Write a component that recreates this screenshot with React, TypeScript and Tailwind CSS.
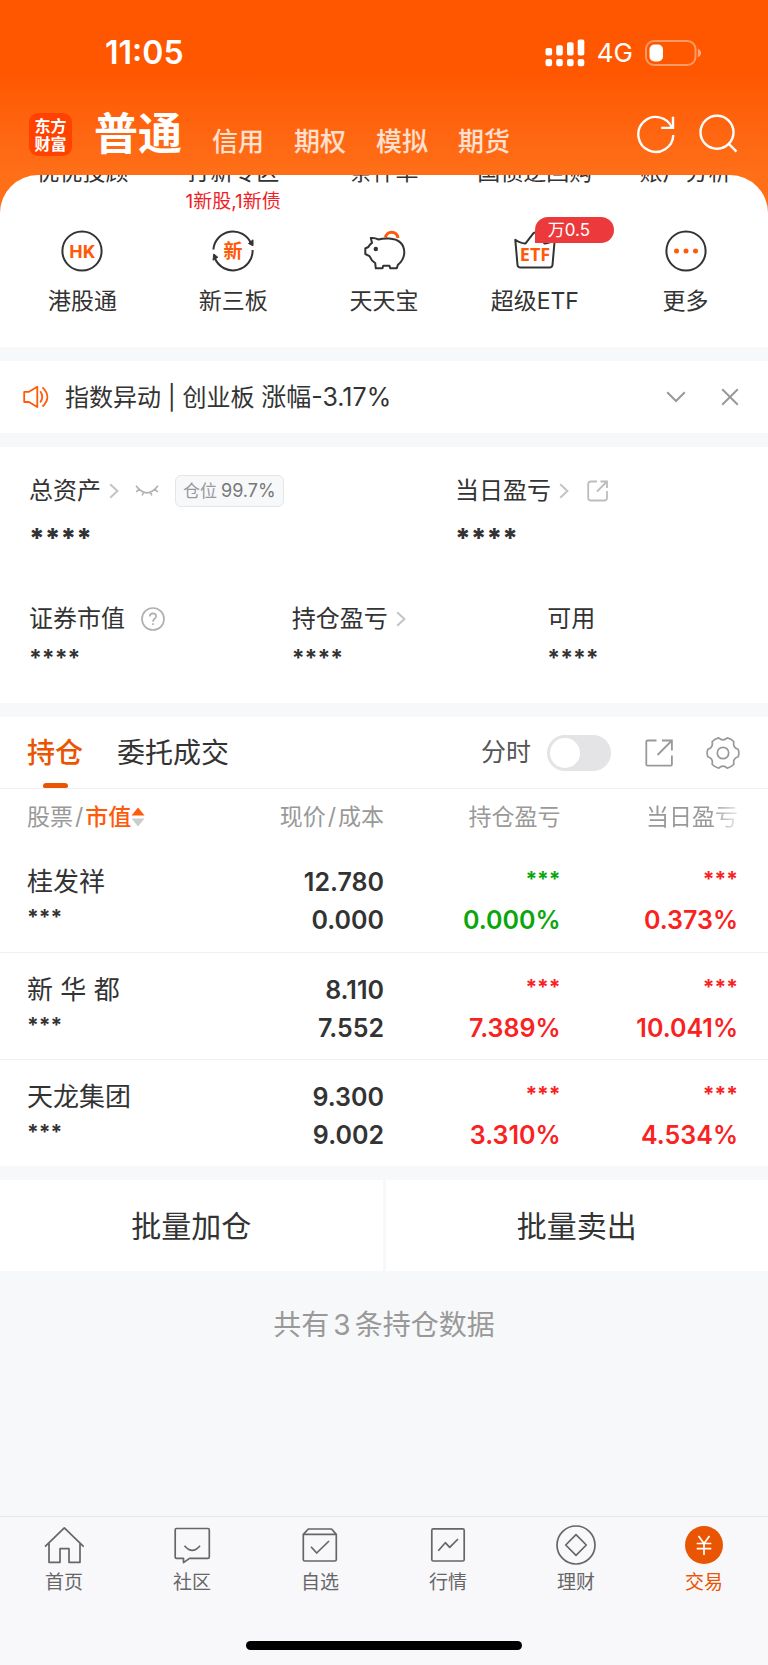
import type { ReactNode } from "react"

const shortcutsTop = [
  { label: "优优投顾" },
  { label: "打新专区", note: "1新股,1新债" },
  { label: "条件单" },
  { label: "国债逆回购" },
  { label: "账户分析" },
]

const shortcuts: { label: string; icon: ReactNode; badge?: string }[] = [
  { label: "港股通", icon: <HkIcon /> },
  { label: "新三板", icon: <NewBoardIcon /> },
  { label: "天天宝", icon: <PiggyIcon /> },
  { label: "超级ETF", icon: <EtfIcon />, badge: "万0.5" },
  { label: "更多", icon: <MoreIcon /> },
]

const holdings = [
  { name: "桂发祥", price: "12.780", cost: "0.000", total: "0.000%", totalColor: "text-[#0ba60b]", day: "0.373%" },
  { name: "新 华 都", price: "8.110", cost: "7.552", total: "7.389%", totalColor: "text-[#f9221f]", day: "10.041%" },
  { name: "天龙集团", price: "9.300", cost: "9.002", total: "3.310%", totalColor: "text-[#f9221f]", day: "4.534%" },
]

const navItems = [
  {
    label: "首页",
    icon: <path d="M1 21.7 20.3 2.8 39.7 21.7M5 18V37.3H16V23.7H25V37.3H36V18" />,
  },
  {
    label: "社区",
    icon: (
      <>
        <path d="M4.5 3.5H36Q37.3 3.5 37.3 5V32Q37.3 33.4 36 33.4H17.5L11.5 37.6V33.4H4.5Q3.2 33.4 3.2 32V5Q3.2 3.5 4.5 3.5Z" />
        <path d="M12.5 20.7Q20.3 30 28 20.7" />
      </>
    ),
  },
  {
    label: "自选",
    icon: (
      <>
        <path d="M3.3 9.4H36.3V34.5Q36.3 36 34.8 36H4.8Q3.3 36 3.3 34.5ZM3.3 9.4 8.3 4H31.5L36.3 9.4" />
        <path d="M11 21.7 16.7 28 29 16" />
      </>
    ),
  },
  {
    label: "行情",
    icon: (
      <>
        <rect x="3.8" y="3.8" width="32.4" height="32.2" rx="1.5" />
        <path d="M10.3 25.7 17.3 17.7 21.7 22.3 30 14" />
      </>
    ),
  },
  {
    label: "理财",
    icon: (
      <>
        <circle cx="20" cy="20" r="19" />
        <path d="M20 9.7 30.3 20 20 30.3 9.7 20Z" />
      </>
    ),
  },
  {
    label: "交易",
    active: true,
    icon: (
      <>
        <circle cx="20" cy="20" r="19" fill="#ea5504" stroke="none" />
        <path d="M14.5 11 20 18.5 25.5 11M12.7 18.5H27.3M12.7 23.7H27.3M20 18.5V30" stroke="#fff" />
      </>
    ),
  },
]

function HkIcon() {
  return (
    <svg viewBox="0 0 44 44" className="size-11" fill="none" stroke="#333" strokeWidth="2">
      <circle cx="22" cy="22" r="19.6" />
      <text x="22" y="29" textAnchor="middle" fontSize="19" fontWeight="700" fontFamily="Roboto, sans-serif" fill="#ff5a0a" stroke="none">
        HK
      </text>
    </svg>
  )
}

function NewBoardIcon() {
  return (
    <svg viewBox="0 0 44 44" className="size-11" fill="none" stroke="#333" strokeWidth="2">
      <path d="M2.4 20.5A19.6 19.6 0 0 1 40 14.5M41.6 21A19.6 19.6 0 0 1 4 29.5" />
      <path d="M37.5 14.5 42 10.8V16.8ZM6.8 28.2 2 31.2 2.8 25Z" fill="#333" strokeWidth="1" />
      <text x="22" y="29" textAnchor="middle" fontSize="19" fontWeight="700" fill="#ff5a0a" stroke="none">
        新
      </text>
    </svg>
  )
}

function PiggyIcon() {
  return (
    <svg viewBox="0 0 44 44" className="size-11" fill="none" stroke="#333" strokeWidth="2" strokeLinejoin="round">
      <path d="M23.5 8.5C24.5 1.8 34.5 1.2 36 9" stroke="#ff5a0a" strokeWidth="3" />
      <path d="M8.8 9Q13 8.6 16.5 10.5Q21 9.3 27 9.6Q42 10.5 42.3 23.5Q42 31 35.8 36L34.8 39.3H28.2L27.5 36.8H21.2L20.5 39.3H13.8L13.2 34.2Q9.5 32 7.5 27.2L3.3 25V19.5L6.3 18Q7.5 15.5 10 13.8Z" />
      <circle cx="13.8" cy="20" r="2.2" fill="#333" stroke="none" />
    </svg>
  )
}

function EtfIcon() {
  return (
    <svg viewBox="0 0 44 44" className="size-11" fill="none" stroke="#333" strokeWidth="2" strokeLinejoin="round">
      <path d="M2.3 10.8Q8 14.8 12.6 14.4L20.5 4.2Q22 2.8 23.5 4.2L31.4 14.4Q36 14.8 41.7 10.8L39.5 36Q39.2 38.6 36.5 38.6H7.5Q4.8 38.6 4.5 36Z" />
      <text
        x="22"
        y="32"
        textAnchor="middle"
        fontSize="18"
        fontWeight="700"
        fontFamily="'Liberation Sans Narrow', 'Open Sans', sans-serif"
        fill="#ff5a0a"
        stroke="none"
      >
        ETF
      </text>
    </svg>
  )
}

function MoreIcon() {
  return (
    <svg viewBox="0 0 44 44" className="size-11" fill="none" stroke="#333" strokeWidth="2">
      <circle cx="22" cy="22" r="19.6" />
      <g fill="#ff5a0a" stroke="none">
        <circle cx="12.5" cy="22" r="2.5" />
        <circle cx="22" cy="22" r="2.5" />
        <circle cx="31.5" cy="22" r="2.5" />
      </g>
    </svg>
  )
}

function ArrowRight() {
  return (
    <svg viewBox="0 0 10 16" className="h-4 w-2.5" fill="none" stroke="#c4c4c4" strokeWidth="2">
      <path d="M1.2 1.2 8.4 8 1.2 14.8" />
    </svg>
  )
}

function StatusBar() {
  return (
    <div className="flex h-[106px] items-center justify-between pr-[67px] pl-[105px] text-white">
      <span className="text-[32px] leading-8 font-semibold">11:05</span>
      <div className="flex items-center">
        <svg viewBox="0 0 40 28" className="h-7 w-10" fill="#fff">
          <rect x="0.5" y="9" width="6.6" height="7.5" rx="1.8" />
          <rect x="11.2" y="6.3" width="6.6" height="10.2" rx="1.8" />
          <rect x="22" y="3.3" width="6.6" height="13.2" rx="1.8" />
          <rect x="32.7" y="0.4" width="6.6" height="16.1" rx="1.8" />
          <rect x="0.5" y="20" width="6.6" height="7.2" rx="2.2" />
          <rect x="11.2" y="20" width="6.6" height="7.2" rx="2.2" />
          <rect x="22" y="20" width="6.6" height="7.2" rx="2.2" />
          <rect x="32.7" y="20" width="6.6" height="7.2" rx="2.2" />
        </svg>
        <span className="mx-3 text-[26px] leading-8">4G</span>
        <svg viewBox="0 0 56 26" className="h-[26px] w-14" fill="none">
          <rect x="1" y="1" width="49.5" height="24" rx="8" stroke="#fff" strokeOpacity="0.4" strokeWidth="2" />
          <path d="M52.8 8.8Q56 10 56 13T52.8 17.2Z" fill="#fff" fillOpacity="0.5" />
          <rect x="4.5" y="4.5" width="13.5" height="17" rx="5" fill="#fff" />
        </svg>
      </div>
    </div>
  )
}

function Header() {
  return (
    <header className="flex h-[69px] items-start justify-between pr-[30px] pl-[29px]">
      <div className="flex items-start">
        <div className="mt-[7px] flex size-[43px] items-center justify-center rounded-[9px] bg-[#ff4200] text-center text-base leading-[18px] font-bold text-white">
          东方
          <br />
          财富
        </div>
        <nav className="flex h-14 items-end">
          <a href="#normal" className="ml-[22px] text-[44px] leading-[56px] font-bold text-white">
            普通
          </a>
          {["信用", "期权", "模拟", "期货"].map((tab) => (
            <a key={tab} href="#account" className="ml-[30px] pb-0.5 text-[26px] leading-9 font-medium text-white/80">
              {tab}
            </a>
          ))}
        </nav>
      </div>
      <div className="mt-2 flex gap-[22px]">
        <button aria-label="刷新">
          <svg viewBox="0 0 40 40" className="size-10" fill="none" stroke="#fff" strokeWidth="2.4">
            <path d="M37.3 21A17.5 17.5 0 1 1 36 13.8" />
            <path d="M37 2.7V13.9H25.2" />
          </svg>
        </button>
        <button aria-label="搜索">
          <svg viewBox="0 0 40 40" className="size-10" fill="none" stroke="#fff" strokeWidth="2.4">
            <circle cx="19" cy="18.3" r="16.5" />
            <path d="M30.8 29.8 38.5 37.6" />
          </svg>
        </button>
      </div>
    </header>
  )
}

function Shortcuts() {
  return (
    <section className="h-[172px] overflow-hidden rounded-t-[38px] bg-white px-[7px]">
      <div className="-mt-[19px] grid h-[57px] grid-cols-5 text-center text-[#333]">
        {shortcutsTop.map((item) => (
          <a key={item.label} href="#shortcut" className="text-[23px] leading-8 whitespace-nowrap">
            {item.label}
            {item.note && <span className="block text-[19px] leading-7 text-[#f01e28]">{item.note}</span>}
          </a>
        ))}
      </div>
      <div className="mt-4 grid grid-cols-5 text-[#333]">
        {shortcuts.map((item) => (
          <a key={item.label} href="#shortcut" className="flex flex-col items-center text-[23px] leading-8">
            <span className="relative">
              {item.icon}
              {item.badge && (
                <span className="absolute -top-3 left-[22px] w-[79px] rounded-[13px] rounded-bl-none bg-[#ec3a3c] pl-[13px] text-[17px] leading-[26px] text-white">
                  {item.badge}
                </span>
              )}
            </span>
            <span className="mt-3">{item.label}</span>
          </a>
        ))}
      </div>
    </section>
  )
}

function Notice() {
  return (
    <section className="flex h-[72px] items-center bg-white pr-7 pl-[23px] text-[#333]">
      <svg viewBox="0 0 26 24" className="h-6 w-[26px]" fill="none" stroke="#ff5a0a" strokeWidth="1.8" strokeLinejoin="round">
        <path d="M1.2 6.8H6L14.3 1.8V22L6 17H1.2Z" />
        <path d="M17.2 6.3Q21.3 11.9 17.2 17.5M19.5 2.3Q29.3 11.9 19.5 21.5" />
      </svg>
      <p className="ml-4 text-2xl leading-9">
        指数异动 | 创业板 <span className="text-[25px]">涨幅-3.17%</span>
      </p>
      <button aria-label="展开" className="ml-auto">
        <svg viewBox="0 0 20 20" className="size-5" fill="none" stroke="#999" strokeWidth="2">
          <path d="M1.2 5.2 10 14 18.8 5.2" />
        </svg>
      </button>
      <button aria-label="关闭" className="ml-[34px]">
        <svg viewBox="0 0 20 20" className="size-5" fill="none" stroke="#999" strokeWidth="2">
          <path d="M2.2 2.2 17.8 17.8M17.8 2.2 2.2 17.8" />
        </svg>
      </button>
    </section>
  )
}

function Assets() {
  return (
    <section className="h-64 bg-white px-[29px] pt-[26px] text-2xl leading-9 text-[#333]">
      <div className="grid grid-cols-[60%_40%]">
        <div>
          <div className="flex items-center">
            总资产
            <span className="ml-2">
              <ArrowRight />
            </span>
            <button aria-label="显示金额" className="ml-4">
              <svg viewBox="0 0 24 12" className="h-3 w-6" fill="none" stroke="#b0b0b0" strokeWidth="1.6">
                <path d="M1 0.8Q12 15 23 0.8M4.2 4 1.2 7M8.6 6.7 7.2 10.6M15.4 6.7 16.8 10.6M19.8 4 22.8 7" />
              </svg>
            </button>
            <span className="ml-4 flex h-8 items-center rounded-md border border-[#e4e5e9] bg-[#f7f8fa] px-[7px] text-lg text-[#999]">
              <span className="text-[17px]">仓位</span>
              <span className="ml-1 text-[#777]">99.7%</span>
            </span>
          </div>
          <p className="pt-2.5 text-[27px] leading-10 font-extrabold">****</p>
        </div>
        <div>
          <div className="flex items-center">
            当日盈亏
            <span className="ml-2">
              <ArrowRight />
            </span>
            <button aria-label="分享盈亏" className="ml-[18px]">
              <svg viewBox="0 0 22 22" className="size-[22px]" fill="none" stroke="#bdbdbd" strokeWidth="1.8">
                <path d="M10 1.5H4Q1.2 1.5 1.2 4.3V17.7Q1.2 20.5 4 20.5H17.2Q20 20.5 20 17.7V11" />
                <path d="M13.5 1.5H20V8M20 1.5 10 11.5" />
              </svg>
            </button>
          </div>
          <p className="pt-2.5 text-[27px] leading-10 font-extrabold">****</p>
        </div>
      </div>
      <div className="mt-[42px] grid grid-cols-[37%_36%_27%]">
        <div>
          <div className="flex items-center">
            证券市值
            <button aria-label="说明" className="ml-4">
              <svg viewBox="0 0 24 24" className="size-6" fill="none" stroke="#b0b0b0" strokeWidth="1.7">
                <circle cx="12" cy="12" r="11" />
                <path d="M8.7 9.5Q8.8 6.4 12 6.3Q15.2 6.4 15.2 9.2Q15.2 10.7 13.3 12Q12 13 12 14.7M12 16.2V18" />
              </svg>
            </button>
          </div>
          <p className="text-[23px] leading-[42px] font-bold">****</p>
        </div>
        <div>
          <div className="flex items-center">
            持仓盈亏
            <span className="ml-2">
              <ArrowRight />
            </span>
          </div>
          <p className="text-[23px] leading-[42px] font-bold">****</p>
        </div>
        <div>
          <div>可用</div>
          <p className="text-[23px] leading-[42px] font-bold">****</p>
        </div>
      </div>
    </section>
  )
}

function Holdings() {
  return (
    <section className="bg-white text-[#333]">
      <div className="flex h-[72px] items-stretch justify-between border-b border-[#f1f1f3] pr-7 pl-[27px]">
        <div className="flex gap-[34px] text-[28px] leading-[73px]">
          <button className="flex flex-col items-center font-medium text-[#ea5504]">
            持仓
            <span className="-mt-[7px] h-[5px] w-[25px] rounded-t-sm rounded-b-xs bg-[#ea5504]" />
          </button>
          <button className="flex">委托成交</button>
        </div>
        <div className="flex items-center">
          <label htmlFor="timeline" className="text-[25px] text-[#555]">
            分时
          </label>
          <input
            id="timeline"
            type="checkbox"
            role="switch"
            className="ml-4 h-9 w-16 appearance-none rounded-full bg-[#e4e4e6] p-[3px] before:block before:size-[30px] before:rounded-full before:bg-white checked:bg-[#ea5504] checked:before:translate-x-7"
          />
          <button aria-label="分享持仓" className="ml-[34px]">
            <svg viewBox="0 0 28 28" className="size-7" fill="none" stroke="#999" strokeWidth="1.8">
              <path d="M11.5 1.5H2.5Q1.3 1.5 1.3 2.7V25.5Q1.3 26.7 2.5 26.7H25.7Q26.9 26.7 26.9 25.5V16.5" />
              <path d="M17 1.5H26.9V11.5M26.9 1.5 12.5 16" />
            </svg>
          </button>
          <button aria-label="设置" className="ml-[33px]">
            <svg viewBox="-17 -17 34 34" className="size-[34px]" fill="none" stroke="#999" strokeWidth="1.7" strokeLinejoin="round">
              <path d="M15.2 3.8Q9.5 5.5 10.9 11.3Q8.3 14.3 4.3 15.1Q0 11-4.3 15.1Q-8.3 14.3-10.9 11.3Q-9.5 5.5-15.2 3.8Q-16.5 0-15.2-3.8Q-9.5-5.5-10.9-11.3Q-8.3-14.3-4.3-15.1Q0-11 4.3-15.1Q8.3-14.3 10.9-11.3Q9.5-5.5 15.2-3.8Q16.5 0 15.2 3.8Z" />
              <circle r="5.7" />
            </svg>
          </button>
        </div>
      </div>
      <table className="w-full table-fixed text-right">
        <thead>
          <tr className="h-14 text-[23px] text-[#999]">
            <th className="w-[27%] pl-[27px] text-left font-normal">
              <button className="flex items-center">
                股票<span className="mx-0.5">/</span>
                <span className="font-medium text-[#ff5a0a]">市值</span>
                <svg viewBox="0 0 14 20" className="h-5 w-3.5">
                  <path d="M7 0.5 13.5 8.5H0.5Z" fill="#ff5a0a" />
                  <path d="M7 19.5 13.5 11.5H0.5Z" fill="#ccc" />
                </svg>
              </button>
            </th>
            <th className="w-[23%] font-normal">
              现价<span className="mx-0.5">/</span>成本
            </th>
            <th className="w-[23%] font-normal">持仓盈亏</th>
            <th className="w-[27%] pr-[30px] font-normal">
              <span className="[mask-image:linear-gradient(to_right,black_70%,#0003)]">当日盈亏</span>
            </th>
          </tr>
        </thead>
        <tbody className="text-[25px] leading-[38px] font-semibold">
          {holdings.map((row) => (
            <tr key={row.name} className="h-[107px] border-b border-[#f1f1f3] align-top last:border-b-0">
              <td className="pt-[18px] pl-[27px] text-left">
                <div className="text-[26px] font-normal">{row.name}</div>
                <div className="pb-1 text-[21px] leading-[34px] font-bold">***</div>
              </td>
              <td className="pt-[18px]">
                <div>{row.price}</div>
                <div>{row.cost}</div>
              </td>
              <td className={`pt-[18px] ${row.totalColor}`}>
                <div className="pb-1 text-[21px] leading-[34px] font-bold">***</div>
                <div>{row.total}</div>
              </td>
              <td className="pt-[18px] pr-[30px] text-[#f9221f]">
                <div className="pb-1 text-[21px] leading-[34px] font-bold">***</div>
                <div>{row.day}</div>
              </td>
            </tr>
          ))}
        </tbody>
      </table>
    </section>
  )
}

function BottomNav() {
  return (
    <footer className="mt-auto border-t border-[#e6e7ea] bg-[#f8f8fb] pt-2 pb-[15px]">
      <nav className="grid grid-cols-6">
        {navItems.map((item) => (
          <a
            key={item.label}
            href="#tab"
            className={`flex flex-col items-center text-[19px] leading-7 ${item.active ? "text-[#ea5504]" : "text-[#666]"}`}
          >
            <svg viewBox="0 0 40 40" className="size-10" fill="none" stroke="#666" strokeWidth="1.7" strokeLinejoin="round">
              {item.icon}
            </svg>
            <span className="mt-1">{item.label}</span>
          </a>
        ))}
      </nav>
      <div className="mx-auto mt-11 h-[9px] w-[36%] rounded-full bg-black" />
    </footer>
  )
}

export default function App() {
  return (
    <div
      lang="zh-CN"
      className="flex min-h-screen flex-col gap-3.5 bg-[#f7f8fa] font-[Inter,'Noto_Sans_CJK_SC',sans-serif]"
    >
      <div className="bg-linear-to-b from-[#ff5600] from-[70px] to-[#ff6f18] to-[175px]">
        <StatusBar />
        <Header />
        <Shortcuts />
      </div>
      <Notice />
      <Assets />
      <Holdings />
      <div className="grid h-[91px] grid-cols-2 gap-[3px] text-[30px] text-[#333]">
        <button className="bg-white pt-0.5">批量加仓</button>
        <button className="bg-white pt-0.5">批量卖出</button>
      </div>
      <p className="mt-4 text-center text-[28px] leading-[48px] text-[#999]">
        共有<span className="mx-1">3</span>条持仓数据
      </p>
      <BottomNav />
    </div>
  )
}
